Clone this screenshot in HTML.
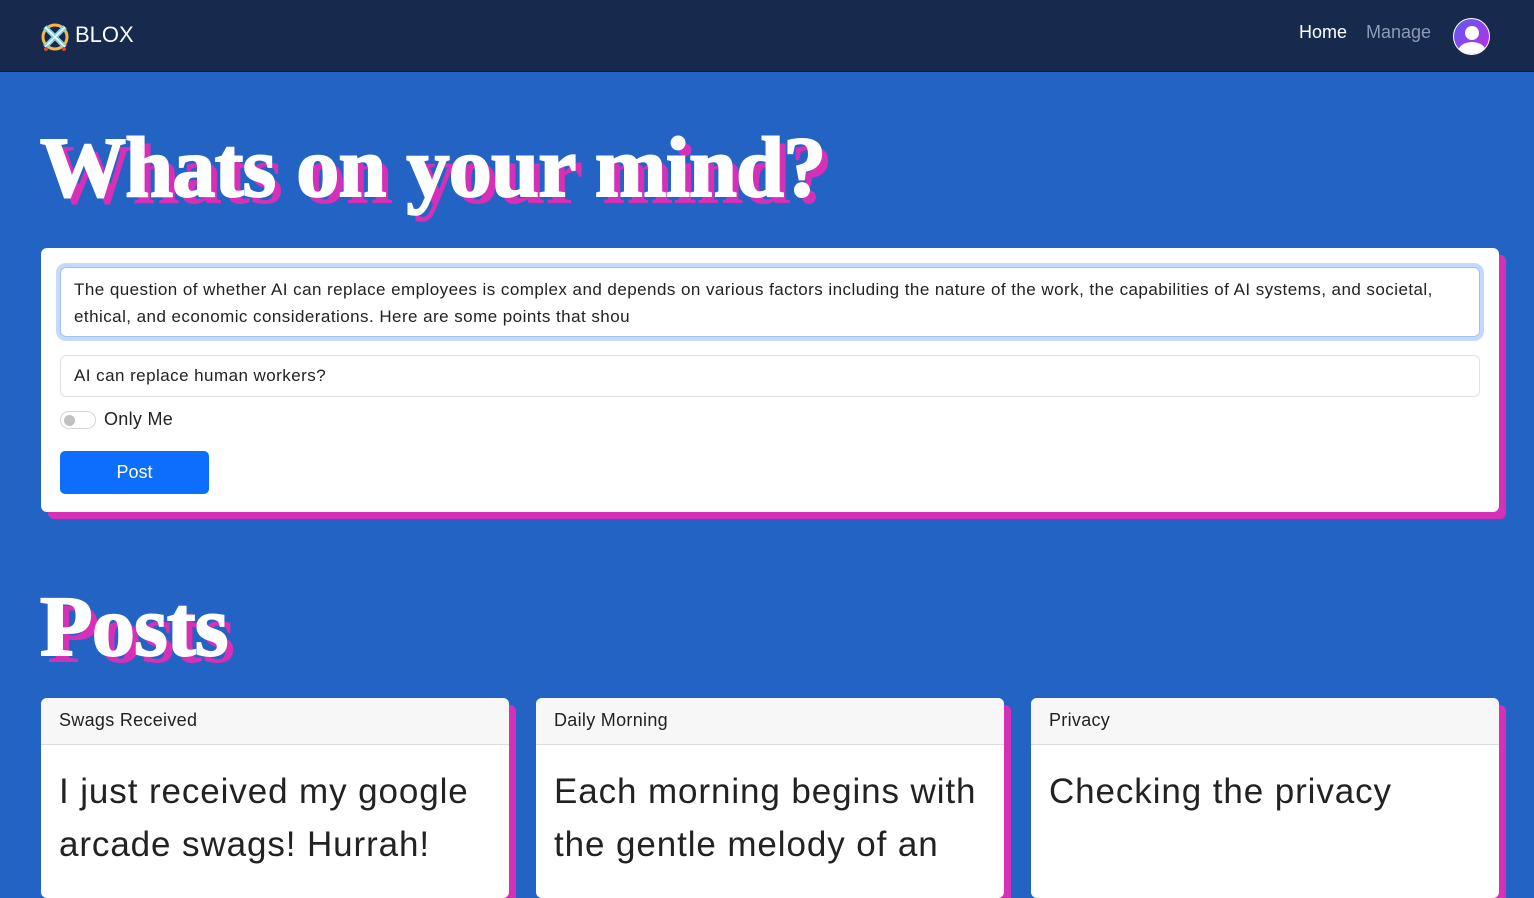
<!DOCTYPE html>
<html><head><meta charset="utf-8"><style>
*{box-sizing:border-box;margin:0;padding:0}
body{width:1534px;height:863px;overflow:hidden;background:#2363c3;font-family:"Liberation Sans",sans-serif;position:relative}
.nav{position:absolute;left:0;top:0;width:1534px;height:72px;background:#172a4e;border-bottom:1px solid #0f1d38}
.brand{position:absolute;left:75px;top:22px;color:#fff;font-family:"Liberation Sans",sans-serif;font-size:22px}
.nl{position:absolute;top:22px;font-size:18px}
.h{position:absolute;left:40px;font-family:"Liberation Serif",serif;font-weight:bold;color:#fff;font-size:86px;line-height:1;text-shadow:7px 7px 0 #d630b8;letter-spacing:-0.7px;white-space:nowrap;-webkit-text-stroke:2px #fff}
.card{position:absolute;background:#fff;border-radius:6px;box-shadow:7px 7px 0 #d630b8}
.ta{position:absolute;left:60px;top:267px;width:1420px;height:70px;border:1px solid #9ec0f3;border-radius:6px;box-shadow:0 0 0 4px #c4dafc;padding:8px 13px;font-size:17px;letter-spacing:0.45px;line-height:27px;color:#222}
.in{position:absolute;left:60px;top:355px;width:1420px;height:42px;border:1px solid #dee2e6;border-radius:6px;padding:10px 13px;font-size:17px;letter-spacing:0.45px;color:#222}
.pc{position:absolute;top:698px;width:468px;height:200px;background:#fff;border-radius:6px;box-shadow:7px 7px 0 #d630b8;overflow:hidden}
.ph{height:47px;background:#f7f7f7;border-bottom:1px solid #dcdcdc;padding:12px 18px;font-size:18px;letter-spacing:0.3px;color:#222}
.pb{padding:20px 18px;font-size:35px;letter-spacing:0.9px;line-height:53px;color:#222}
</style></head><body>
<div class="nav">
<svg style="position:absolute;left:40px;top:22px" width="30" height="30" viewBox="0 0 30 30">
<circle cx="15" cy="15" r="12" fill="none" stroke="#f2b84a" stroke-width="3"/>
<path d="M5 5 L25 25 M25 5 L5 25" stroke="#7fd1e8" stroke-width="5"/>
<path d="M5 5 L25 25 M25 5 L5 25" stroke="#fff" stroke-width="1.5"/>
<circle cx="6" cy="27" r="2" fill="#e0443a"/><circle cx="24" cy="27" r="2" fill="#e0443a"/>
</svg>
<div class="brand">BLOX</div>
<div class="nl" style="left:1299px;color:#fff">Home</div>
<div class="nl" style="left:1366px;color:#8d9bb5">Manage</div>
<div style="position:absolute;left:1453px;top:18px;width:37px;height:37px;border-radius:50%;background:linear-gradient(135deg,#5a5cf5,#c02ee0);overflow:hidden;border:1px solid #fff">
<div style="position:absolute;left:11px;top:7px;width:14px;height:14px;border-radius:50%;background:#fff"></div>
<div style="position:absolute;left:4px;top:23px;width:28px;height:20px;border-radius:50%;background:#fff"></div>
</div>
</div>
<div class="h" style="top:124px">Whats on your mind?</div>
<div class="card" style="left:41px;top:248px;width:1458px;height:264px"></div>
<div class="ta">The question of whether AI can replace employees is complex and depends on various factors including the nature of the work, the capabilities of AI systems, and societal, ethical, and economic considerations. Here are some points that shou</div>
<div class="in">AI can replace human workers?</div>
<div style="position:absolute;left:60px;top:411px;width:36px;height:18px;border:1px solid #d6d6d6;border-radius:9px"><div style="position:absolute;left:3px;top:3px;width:11px;height:11px;border-radius:50%;background:#c0c0c0"></div></div>
<div style="position:absolute;left:104px;top:409px;font-size:18px;letter-spacing:0.3px;color:#222">Only Me</div>
<div style="position:absolute;left:60px;top:451px;width:149px;height:43px;background:#0d6efd;border-radius:5px;color:#fff;font-size:18px;text-align:center;line-height:43px">Post</div>
<div class="h" style="top:583px">Posts</div>
<div class="pc" style="left:41px"><div class="ph">Swags Received</div><div class="pb">I just received my google arcade swags! Hurrah!</div></div>
<div class="pc" style="left:536px"><div class="ph">Daily Morning</div><div class="pb">Each morning begins with the gentle melody of an</div></div>
<div class="pc" style="left:1031px"><div class="ph">Privacy</div><div class="pb">Checking the privacy</div></div>
</body></html>
